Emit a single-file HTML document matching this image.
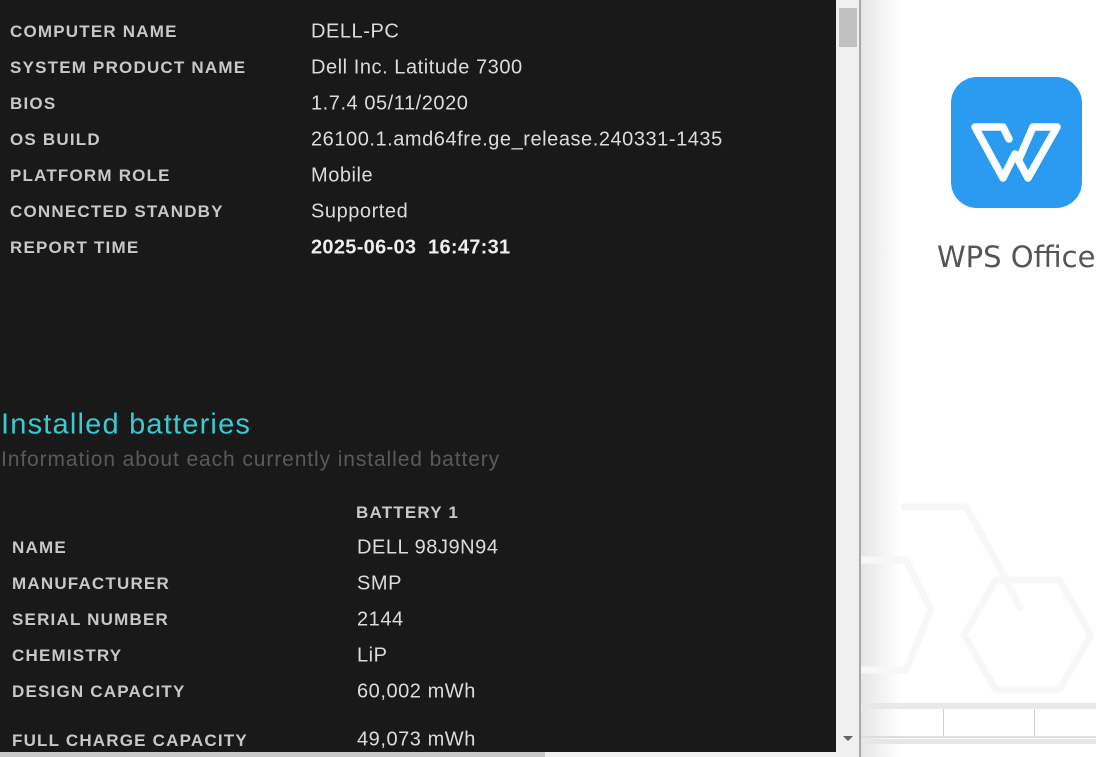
<!DOCTYPE html>
<html><head><meta charset="utf-8"><style>
body{margin:0;width:1096px;height:757px;overflow:hidden;position:relative;background:#fff;font-family:"Liberation Sans",sans-serif}
#dark{position:absolute;left:0;top:0;width:836px;height:752px;background:#191919}
.l{position:absolute;font-weight:bold;font-size:17px;color:#c8c8c8;letter-spacing:1.2px;white-space:nowrap;transform:translateY(-50%)}
.v{position:absolute;font-size:20px;color:#dcdcdc;white-space:nowrap;letter-spacing:0.55px;transform:translateY(-50%)}
</style></head><body>
<div id="dark">
<div class="l" style="left:10px;top:32px">COMPUTER NAME</div><div class="v" style="left:311px;top:32px">DELL-PC</div>
<div class="l" style="left:10px;top:68px">SYSTEM PRODUCT NAME</div><div class="v" style="left:311px;top:68px">Dell Inc. Latitude 7300</div>
<div class="l" style="left:10px;top:104px">BIOS</div><div class="v" style="left:311px;top:104px">1.7.4 05/11/2020</div>
<div class="l" style="left:10px;top:140px">OS BUILD</div><div class="v" style="left:311px;top:140px">26100.1.amd64fre.ge_release.240331-1435</div>
<div class="l" style="left:10px;top:176px">PLATFORM ROLE</div><div class="v" style="left:311px;top:176px">Mobile</div>
<div class="l" style="left:10px;top:212px">CONNECTED STANDBY</div><div class="v" style="left:311px;top:212px">Supported</div>
<div class="l" style="left:10px;top:248px">REPORT TIME</div><div class="v" style="left:311px;top:248px;font-weight:bold;color:#eee;letter-spacing:0.3px">2025-06-03&nbsp; 16:47:31</div>
<div class="v" style="left:1px;top:425px;font-size:29px;color:#3cc9d4;letter-spacing:1.2px">Installed batteries</div>
<div class="v" style="left:1px;top:460px;font-size:21px;color:#5a5a5a;letter-spacing:0.9px">Information about each currently installed battery</div>
<div class="l" style="left:356px;top:513px">BATTERY 1</div>
<div class="l" style="left:12px;top:548px">NAME</div><div class="v" style="left:357px;top:548px">DELL 98J9N94</div>
<div class="l" style="left:12px;top:584px">MANUFACTURER</div><div class="v" style="left:357px;top:584px">SMP</div>
<div class="l" style="left:12px;top:620px">SERIAL NUMBER</div><div class="v" style="left:357px;top:620px">2144</div>
<div class="l" style="left:12px;top:656px">CHEMISTRY</div><div class="v" style="left:357px;top:656px">LiP</div>
<div class="l" style="left:12px;top:692px">DESIGN CAPACITY</div><div class="v" style="left:357px;top:692px">60,002 mWh</div>
<div class="l" style="left:12px;top:741px">FULL CHARGE CAPACITY</div><div class="v" style="left:357px;top:740px">49,073 mWh</div>
</div>
<div style="position:absolute;left:0;top:752px;width:836px;height:5px;background:#f0f0f0"></div>
<div style="position:absolute;left:0;top:752px;width:545px;height:5px;background:#c8c8c8"></div>
<div style="position:absolute;left:836px;top:0;width:23px;height:757px;background:#f0f0f0"></div>
<div style="position:absolute;left:839px;top:8px;width:18px;height:39px;background:#c1c1c1"></div>
<div style="position:absolute;left:843px;top:736px;width:0;height:0;border-left:5px solid transparent;border-right:5px solid transparent;border-top:5px solid #606060"></div>
<div style="position:absolute;left:859px;top:0;width:2px;height:757px;background:#a8a8a8"></div>
<div style="position:absolute;left:861px;top:0;width:40px;height:757px;background:linear-gradient(90deg,#e6e6e6,#fff)"></div>
<svg style="position:absolute;left:861px;top:480px" width="235" height="220"><g fill="none" stroke="#f7f7f7" stroke-width="7"><path d="M40 27 L105 27 L140 90 L160 130"/><path d="M0 80 L45 80 L70 130 L45 190 L0 190"/><path d="M135 100 L198 100 L230 155 L198 210 L135 210 L103 155 Z"/></g></svg>
<div style="position:absolute;left:861px;top:703px;width:235px;height:6px;background:#e8e8e8"></div>
<div style="position:absolute;left:861px;top:736px;width:235px;height:2px;background:#ddd"></div>
<div style="position:absolute;left:861px;top:739px;width:235px;height:5px;background:#e6e6e6"></div>
<div style="position:absolute;left:943px;top:709px;width:1px;height:27px;background:#d0d0d0"></div>
<div style="position:absolute;left:1034px;top:709px;width:1px;height:27px;background:#d0d0d0"></div>
<svg style="position:absolute;left:951px;top:77px" width="131" height="131" viewBox="0 0 131 131"><rect width="131" height="131" rx="26" fill="#2b9bf2"/><path d="M58 62 L52 50 L24 50 L52 101 L64 77 L77 101 L106 50 L82 50 L68 82" fill="none" stroke="#fff" stroke-width="7.5" stroke-linejoin="round" stroke-linecap="round"/></svg>
<div style="position:absolute;left:937px;top:240px;font-family:'DejaVu Sans',sans-serif;font-size:29px;color:#555;white-space:nowrap">WPS Office</div>
</body></html>
